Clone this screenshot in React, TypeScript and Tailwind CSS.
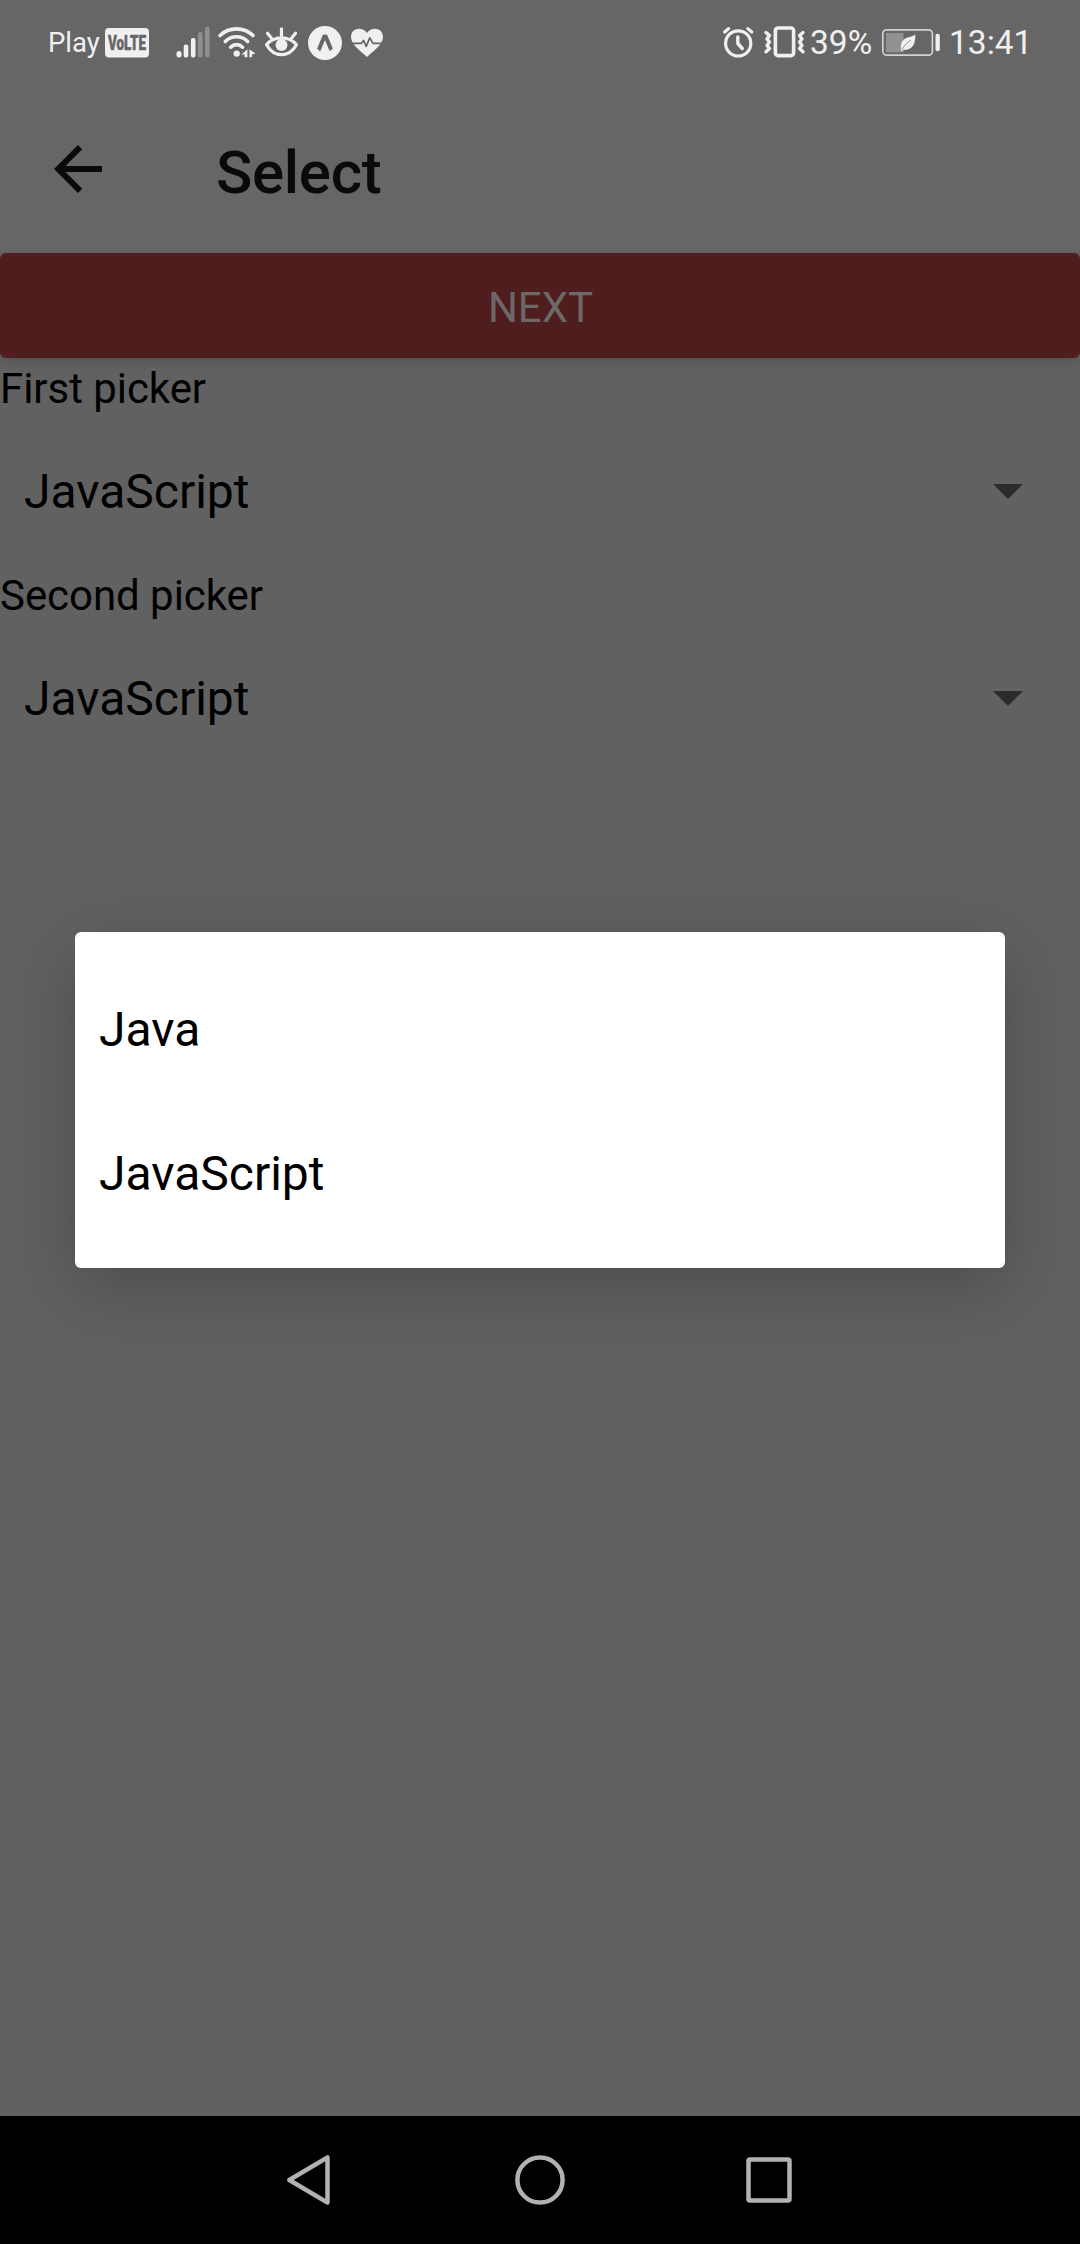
import type { ReactNode } from "react";

const INK = "#f0f0f0";

/** Status bar glyph: full bar height, horizontally clipped to its own slot. */
function Glyph({ x, w, children }: { x: number; w: number; children: ReactNode }) {
  return (
    <svg
      className="block shrink-0"
      width={w}
      height={84}
      viewBox={`${x} 0 ${w} 84`}
      fill="none"
      stroke={INK}
      strokeLinecap="round"
      strokeLinejoin="round"
      aria-hidden="true"
    >
      {children}
    </svg>
  );
}

function StatusBar() {
  return (
    <div className="flex h-[84px] items-start text-[#f0f0f0]">
      <span className="ml-[48px] w-[55px] shrink-0 whitespace-nowrap text-[27.5px] leading-[86px]">Play</span>
      <Glyph x={103} w={67}>
        <rect x="105" y="28" width="44" height="29.5" rx="4" fill={INK} stroke="none" />
        <text
          x="108"
          y="50"
          fontSize="20"
          fontWeight="900"
          fill="#666"
          stroke="#666"
          strokeWidth="0.5"
          textLength="38"
          lengthAdjust="spacingAndGlyphs"
        >
          VoLTE
        </text>
      </Glyph>
      <Glyph x={170} w={45}>
        <g stroke="none" fill={INK}>
          <rect x="176.5" y="51" width="5" height="6.5" rx="2.5" />
          <rect x="183.7" y="44.5" width="4.6" height="13" rx="2" />
          <rect x="190.9" y="38" width="4.6" height="19.5" rx="2" />
          <rect x="198" y="32" width="4.6" height="25.5" rx="2" fill="#8f8f8f" />
          <rect x="205" y="26.8" width="4.6" height="30.7" rx="2" fill="#8f8f8f" />
        </g>
      </Glyph>
      <Glyph x={215} w={45}>
        <g strokeWidth="3.6">
          <path d="M220 35.5 C229 26.7 244 26.7 253 35.5" />
          <path d="M225.3 41.5 C231.5 35.2 241.5 35.2 247.7 41.5" />
          <path d="M230.7 47.2 C234 43.8 239 43.8 242.6 47.2" />
        </g>
        <circle cx="236.7" cy="53.6" r="3.2" fill={INK} stroke="none" />
        <path d="M247.4 49.3 V57.3 H244.6 V54.5 H241.6 Z M249.4 57.3 V49.3 L255.4 53.6 L252 54.6 V57.3 Z" fill={INK} stroke="none" />
      </Glyph>
      <Glyph x={260} w={43}>
        <g strokeWidth="3.2">
          <path d="M266.5 44.8 C274 35.5 289 35.5 296.5 44.8 C289 58 274 58 266.5 44.8 Z" />
          <path d="M281.5 28.8 V35.5 M267.5 33.3 L271.5 38.2 M295.5 33.3 L291.5 38.2" />
        </g>
        <circle cx="281.5" cy="45" r="6" fill={INK} stroke="none" />
      </Glyph>
      <Glyph x={303} w={43}>
        <circle cx="325" cy="43" r="17" fill={INK} stroke="none" />
        <path
          d="M317.6 48.6 L323.2 35 H326.8 L332.4 48.6 L329.8 50.6 L325 39 L320.2 50.6 Z"
          fill="#666"
          stroke="#666"
          strokeWidth="0.8"
        />
      </Glyph>
      <Glyph x={346} w={44}>
        <path
          d="M367 57 C361 51.5 351 44.5 351 37 C351 28 362 26 367 33 C372 26 383 28 383 37 C383 44.5 373 51.5 367 57 Z"
          fill={INK}
          stroke="none"
        />
        <path d="M351 43.4 H361.3 L363.6 40.4 L366.2 46.4 L369.8 37.8 L373 43.4 H383" stroke="#666" strokeWidth="1.7" />
      </Glyph>

      <div className="ml-[328px] flex">
        <Glyph x={718} w={42}>
          <circle cx="738.2" cy="43.4" r="12.6" strokeWidth="3.2" />
          <path d="M737.8 37 V43.5 L742.3 48.5" strokeWidth="3.4" />
          <path d="M724.6 32 L728.6 28.6 M751.8 32 L747.8 28.6" strokeWidth="3.2" />
        </Glyph>
        <Glyph x={760} w={50}>
          <rect x="775.4" y="28" width="18.2" height="27.6" rx="2.6" strokeWidth="3.6" />
          <g strokeWidth="3.4">
            <path d="M766 32.5 L769.5 35.5 L767 39 L769.5 42 L767 45.5 L769.5 48.5 L766 51.8" />
            <path d="M803 32.5 L799.5 35.5 L802 39 L799.5 42 L802 45.5 L799.5 48.5 L803 51.8" />
          </g>
        </Glyph>
        <span className="w-[70px] shrink-0 whitespace-nowrap text-[33.5px] leading-[86px]">39%</span>
        <Glyph x={880} w={70}>
          <rect x="882.8" y="29.8" width="49.6" height="25.4" rx="4" stroke="#d2d2d2" strokeWidth="1.7" />
          <rect x="886" y="33" width="17.5" height="19.4" fill="#919191" stroke="none" />
          <path
            d="M901.2 51 C899.5 43 903 38.5 908.5 37.3 C911.5 36.6 914 35.8 915.3 34.6 C915.8 44 912 50.8 903.5 49.8 L901.8 51.2 Z"
            fill={INK}
            stroke="none"
          />
          <path d="M902 49.5 C904 45.5 907 42.5 910.5 40.5" stroke="#8a8a8a" strokeWidth="0.9" />
          <rect x="935.5" y="33.8" width="4.3" height="17.4" rx="2" fill={INK} stroke="none" />
        </Glyph>
        <span className="-ml-px shrink-0 whitespace-nowrap text-[33.5px] leading-[85px]">13:41</span>
      </div>
    </div>
  );
}

function Header() {
  return (
    <header className="flex h-[169px] items-center pl-[54px] text-[#0a0a0a]">
      <svg width="48" height="48" viewBox="4 4 16 16" fill="currentColor" className="block" aria-hidden="true">
        <path d="M20 11H7.83l5.59-5.59L12 4l-8 8 8 8 1.41-1.41L7.83 13H20v-2z" />
      </svg>
      <h1 className="ml-[114px] pt-2 text-[60px] leading-none font-medium tracking-[-0.3px]">Select</h1>
    </header>
  );
}

function Picker({ label, value }: { label: string; value: string }) {
  return (
    <section className="text-black">
      <div className="h-[57px] pt-[2px] text-[42px] leading-[57px] tracking-[-0.05px]">{label}</div>
      <div className="flex h-[150px] items-center justify-between pt-[2px] pr-[57px] pl-6">
        <span className="pt-[2px] text-[48px] leading-[56px]">{value}</span>
        <svg width="30" height="15" viewBox="0 0 30 15" className="block" aria-hidden="true">
          <path d="M0 0H30L15 15Z" fill="#2c2c2c" />
        </svg>
      </div>
    </section>
  );
}

function NavigationBar() {
  return (
    <nav className="flex h-32 items-center bg-black">
      <svg width="1080" height="128" viewBox="0 2116 1080 128" fill="none" stroke="#b2b2b2" strokeWidth="4.5" strokeLinejoin="round" aria-hidden="true">
        <path d="M289.3 2180 L327.5 2157.4 V2202.6 Z" />
        <circle cx="540" cy="2180" r="22.6" />
        <rect x="748.5" y="2159.5" width="41" height="41" rx="1.5" />
      </svg>
    </nav>
  );
}

export default function App() {
  return (
    <div className="relative flex h-[2244px] w-[1080px] flex-col overflow-hidden bg-[#616161] font-['Roboto',sans-serif]">
      <div className="bg-[#666666]">
        <StatusBar />
        <Header />
      </div>
      <main className="flex-1">
        <button className="flex h-[105px] w-full items-center justify-center rounded-[6px] bg-[#4f1d1e] pt-[3px] pl-px text-[42px] text-[#6c6868] shadow-[0_3px_12px_rgba(0,0,0,0.16)]">
          NEXT
        </button>
        <Picker label="First picker" value="JavaScript" />
        <Picker label="Second picker" value="JavaScript" />
      </main>
      <NavigationBar />

      <div
        role="listbox"
        className="absolute top-[932px] left-[75px] w-[930px] rounded-[6px] bg-white py-6 text-[48px] text-black shadow-[0_20px_72px_rgba(0,0,0,0.22)]"
      >
        {["Java", "JavaScript"].map((language) => (
          <div key={language} role="option" className="flex h-36 items-center px-6 pt-[3px]">
            {language}
          </div>
        ))}
      </div>
    </div>
  );
}
